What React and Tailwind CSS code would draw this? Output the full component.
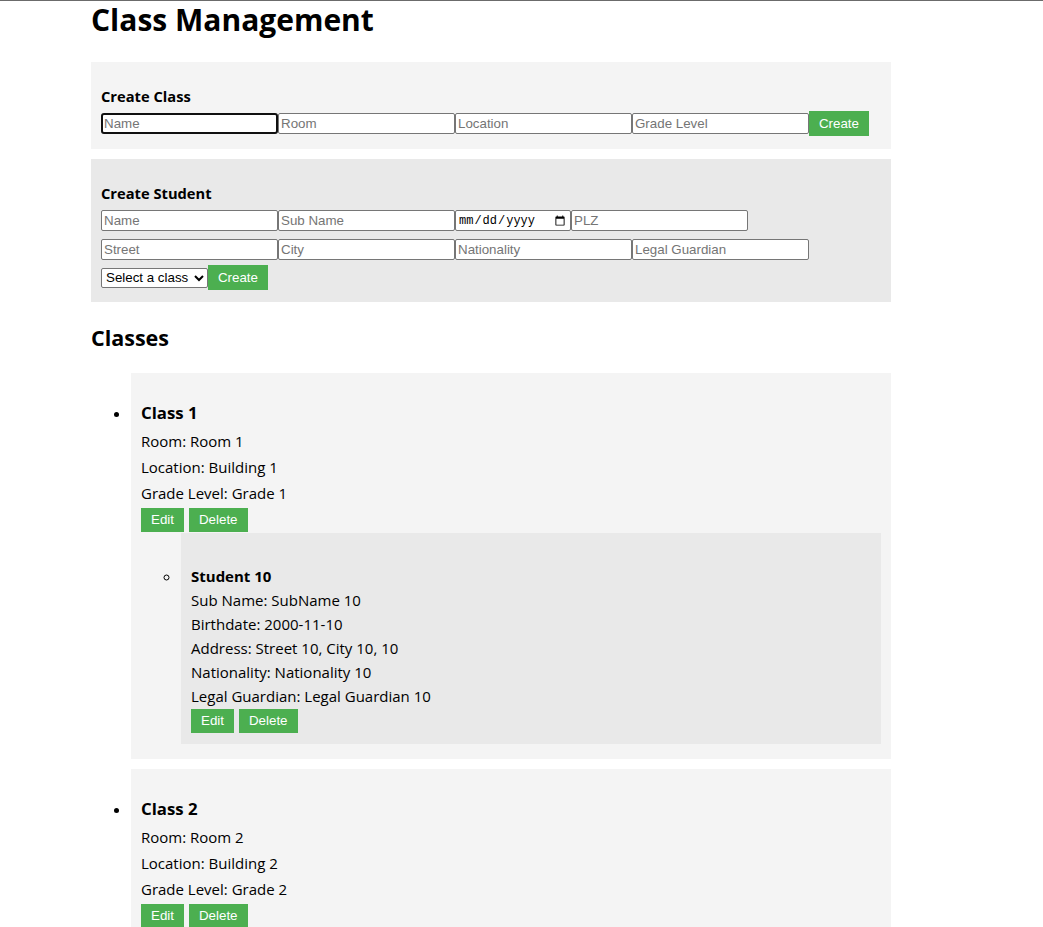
import { useState } from "react";

const CLASSES = [
    {
        id: 1,
        name: "Class 1",
        room: "Room 1",
        location: "Building 1",
        gradeLevel: "Grade 1",
        students: [
            {
                id: 10,
                name: "Student 10",
                subName: "SubName 10",
                birthdate: "2000-11-10",
                street: "Street 10",
                city: "City 10",
                plz: "10",
                nationality: "Nationality 10",
                legalGuardian: "Legal Guardian 10"
            }
        ]
    },
    {
        id: 2,
        name: "Class 2",
        room: "Room 2",
        location: "Building 2",
        gradeLevel: "Grade 2",
        students: []
    }
];

// shared bits for the form fields
const fieldBase =
    "h-[21px] shrink-0 bg-white text-black placeholder:text-[#757575] outline-none";
const inputCls =
    fieldBase +
    " w-[177px] border border-[#767676] rounded-[2px] px-[2px] font-['Liberation_Sans',Arial,sans-serif] text-[13.33px]";
const focusedCls =
    fieldBase +
    " w-[177px] border-2 border-[#101010] rounded-[3px] px-[1px] font-['Liberation_Sans',Arial,sans-serif] text-[13.33px]";
const dateCls =
    fieldBase +
    " w-[116px] border border-[#767676] rounded-[2px] px-[2px] font-['Liberation_Mono','DejaVu_Sans_Mono',monospace] text-[12px]";

const btnCls =
    "bg-[#4CAF50] text-white font-['Liberation_Sans',Arial,sans-serif] text-[13.33px] leading-none";

export default function App() {
    const [classes] = useState(CLASSES);

    return (
        <div className="min-h-screen bg-white text-black font-['Open_Sans','Noto_Sans',sans-serif]">
            <div className="h-px bg-[#6b6b6b]" />

            <div className="ml-[91px] w-[800px]">
                <h1 className="text-[30px] font-bold leading-[38px] mb-[23px]">
                    Class Management
                </h1>

                {/* ================= CREATE CLASS ================= */}
                <div className="bg-[#f4f4f4] h-[87px] px-[10px] pt-[24px]">
                    <h3 className="text-[14.7px] font-bold leading-[20px]">
                        Create Class
                    </h3>
                    <div className="flex items-center h-[25px] mt-[5px]">
                        <input placeholder="Name" className={focusedCls} />
                        <input placeholder="Room" className={inputCls} />
                        <input placeholder="Location" className={inputCls} />
                        <input placeholder="Grade Level" className={inputCls} />
                        <button className={btnCls + " h-[25px] w-[60px]"}>
                            Create
                        </button>
                    </div>
                </div>

                {/* ================= CREATE STUDENT ================= */}
                <div className="bg-[#e9e9e9] h-[143px] mt-[10px] px-[10px] pt-[24px]">
                    <h3 className="text-[14.7px] font-bold leading-[20px]">
                        Create Student
                    </h3>
                    <div className="flex mt-[7px]">
                        <input placeholder="Name" className={inputCls} />
                        <input placeholder="Sub Name" className={inputCls} />
                        <input type="date" className={dateCls} />
                        <input placeholder="PLZ" className={inputCls} />
                    </div>
                    <div className="flex mt-[8px]">
                        <input placeholder="Street" className={inputCls} />
                        <input placeholder="City" className={inputCls} />
                        <input placeholder="Nationality" className={inputCls} />
                        <input placeholder="Legal Guardian" className={inputCls} />
                    </div>
                    <div className="flex items-center h-[25px] mt-[5px]">
                        <select className="h-[20px] w-[107px] border border-[#767676] rounded-[2px] bg-white font-['Liberation_Sans',Arial,sans-serif] text-[13.33px] text-black">
                            <option>Select a class</option>
                            {classes.map((c) => (
                                <option key={c.id}>{c.name}</option>
                            ))}
                        </select>
                        <button className={btnCls + " h-[25px] w-[60px]"}>
                            Create
                        </button>
                    </div>
                </div>

                {/* ================= CLASSES ================= */}
                <h2 className="text-[21.5px] font-bold leading-[32px] mt-[20px]">
                    Classes
                </h2>

                <ul className="list-disc pl-[40px] mt-[19px]">
                    {classes.map((c) => (
                        <li key={c.id} className="bg-[#f4f4f4] px-[10px] pt-[28px] pb-[15px] mb-[10px] text-[15px]">
                            <h3 className="text-[16.8px] font-bold leading-[24px] mb-[3px]">
                                {c.name}
                            </h3>
                            <p className="leading-[26px]">Room: {c.room}</p>
                            <p className="leading-[26px]">Location: {c.location}</p>
                            <p className="leading-[26px]">Grade Level: {c.gradeLevel}</p>
                            <div className="flex gap-[5px] mt-[2px]">
                                <button className={btnCls + " h-[24px] px-[10px]"}>Edit</button>
                                <button className={btnCls + " h-[24px] px-[10px]"}>Delete</button>
                            </div>

                            {c.students.length > 0 && (
                                <ul className="list-[circle] pl-[40px] mt-[1px]">
                                    {c.students.map((s) => (
                                        <li key={s.id} className="bg-[#e9e9e9] px-[10px] pt-[31px] pb-[11px]">
                                            <h4 className="font-bold leading-[24px]">
                                                {s.name}
                                            </h4>
                                            <p className="leading-[24px]">Sub Name: {s.subName}</p>
                                            <p className="leading-[24px]">Birthdate: {s.birthdate}</p>
                                            <p className="leading-[24px]">
                                                Address: {s.street}, {s.city}, {s.plz}
                                            </p>
                                            <p className="leading-[24px]">Nationality: {s.nationality}</p>
                                            <p className="leading-[24px]">Legal Guardian: {s.legalGuardian}</p>
                                            <div className="flex gap-[5px] mt-[1px]">
                                                <button className={btnCls + " h-[24px] px-[10px]"}>Edit</button>
                                                <button className={btnCls + " h-[24px] px-[10px]"}>Delete</button>
                                            </div>
                                        </li>
                                    ))}
                                </ul>
                            )}
                        </li>
                    ))}
                </ul>
            </div>
        </div>
    );
}
